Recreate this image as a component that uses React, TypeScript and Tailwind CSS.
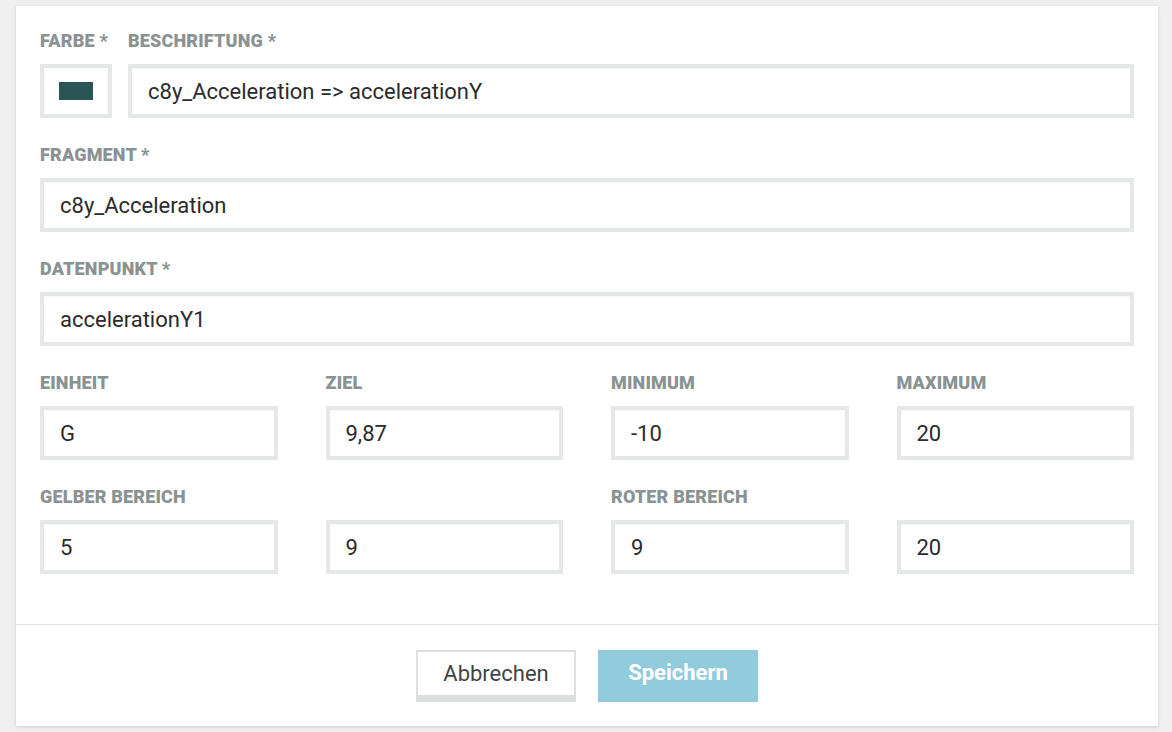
import React from "react";

const font = { fontFamily: "Roboto, 'Liberation Sans', sans-serif" };

function Label({ children }: { children: React.ReactNode }) {
  return (
    <div className="h-5 mb-[13px] text-[18px] leading-5 font-black uppercase text-[#8a9292] tracking-[0.01em] whitespace-nowrap">
      {children}
    </div>
  );
}

function Input({ value }: { value: string }) {
  return (
    <div className="h-[54px] border-4 border-[#e6e8e7] bg-white flex items-center pl-4 text-[22px] text-[#2b2b2b] shadow-[inset_0_1px_2px_rgba(0,0,0,0.04)]">
      {value}
    </div>
  );
}

export default function App() {
  const grid1 = [
    { label: "Einheit", value: "G" },
    { label: "Ziel", value: "9,87" },
    { label: "Minimum", value: "-10" },
    { label: "Maximum", value: "20" },
  ];
  const grid2 = [
    { label: "Gelber Bereich", value: "5" },
    { label: "", value: "9" },
    { label: "Roter Bereich", value: "9" },
    { label: "", value: "20" },
  ];

  return (
    <div className="min-h-[732px] bg-[#efefef] pt-[6px] pl-4 pr-[14px]" style={font}>
      <div className="bg-white shadow-[0_1px_3px_rgba(0,0,0,0.15)]">
        <div className="px-6 pt-[25px] pb-[50px] flex flex-col gap-[27px]">
          <div className="flex gap-4">
            <div className="w-[72px] shrink-0">
              <Label>Farbe *</Label>
              <div className="h-[54px] border-4 border-[#e6e8e7] bg-white flex items-center justify-center">
                <div className="w-[34px] h-[18px] bg-[#2a5557]" />
              </div>
            </div>
            <div className="flex-1">
              <Label>Beschriftung *</Label>
              <Input value="c8y_Acceleration => accelerationY" />
            </div>
          </div>
          <div>
            <Label>Fragment *</Label>
            <Input value="c8y_Acceleration" />
          </div>
          <div>
            <Label>Datenpunkt *</Label>
            <Input value="accelerationY1" />
          </div>
          <div className="grid grid-cols-4 gap-x-12">
            {grid1.map((f) => (
              <div key={f.label}>
                <Label>{f.label}</Label>
                <Input value={f.value} />
              </div>
            ))}
          </div>
          <div className="grid grid-cols-4 gap-x-12">
            {grid2.map((f, i) => (
              <div key={i}>
                <Label>{f.label}</Label>
                <Input value={f.value} />
              </div>
            ))}
          </div>
        </div>
        <div className="border-t border-[#e2e2e2] pt-[25px] pb-6 flex justify-center gap-[22px]">
          <button className="w-40 h-[52px] bg-white border-2 border-b-[7px] border-[#dcdfde] text-[22px] text-[#3f4444]">
            Abbrechen
          </button>
          <button className="w-40 h-[52px] pb-2 bg-[#92cbdc] text-[22px] font-bold text-white">
            Speichern
          </button>
        </div>
      </div>
    </div>
  );
}
